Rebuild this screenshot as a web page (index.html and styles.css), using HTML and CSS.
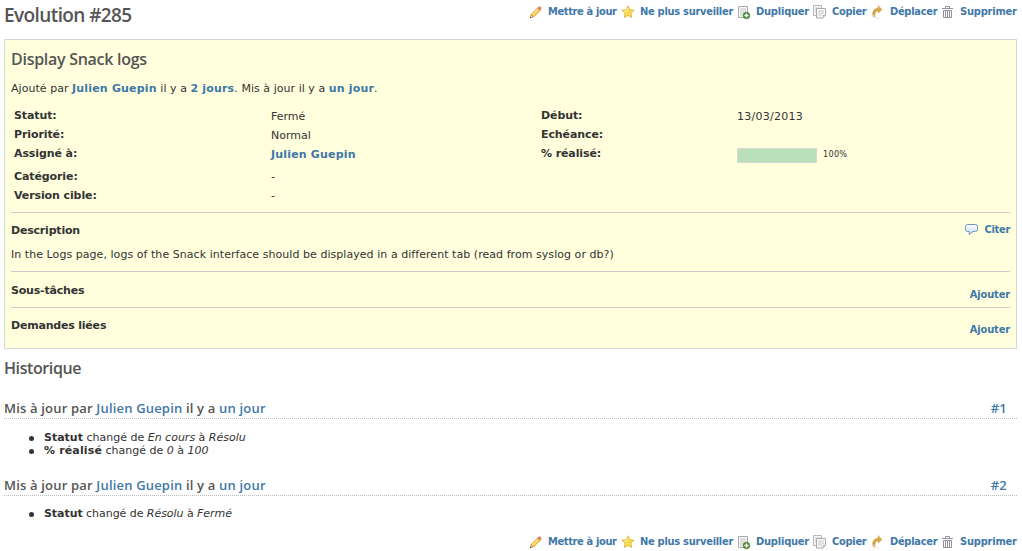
FILE: index.html
```html
<!DOCTYPE html>
<html lang="fr">
<head>
<meta charset="utf-8">
<title>Evolution #285</title>
<link rel="stylesheet" href="styles.css">
</head>
<body>
<svg class="defs" width="0" height="0" aria-hidden="true">
  <defs>
    <linearGradient id="gold" x1="0" y1="0" x2="0" y2="1"><stop offset="0" stop-color="#dfb65c"/><stop offset=".7" stop-color="#d09a38"/><stop offset="1" stop-color="#ead9b8"/></linearGradient>
    <linearGradient id="bubble" x1="0" y1="0" x2="0" y2="1"><stop offset="0" stop-color="#fff"/><stop offset="1" stop-color="#bcdcf5"/></linearGradient>
    <symbol id="edit" viewBox="0 0 16 16"><path d="M2.2 13.8l.9-3.2 2.3 2.3z" fill="#f6ddb0" stroke="#8a6a3a" stroke-width=".6"/><path d="M3.2 10.5l6.2-6.2 2.4 2.4-6.2 6.2z" fill="#ffd34a" stroke="#d58d25" stroke-width=".8"/><path d="M4.4 11l5.9-5.9" stroke="#fff1a5"/><path d="M9.6 4.1l1.2-1.2q1-.6 1.8.2t.4 2l-1.1 1.3z" fill="#e98a6b" stroke="#c8694a" stroke-width=".6"/><path d="M2 14l1.3-.4-.9-.9z" fill="#333"/></symbol>
    <symbol id="fav" viewBox="0 0 16 16"><path d="M8 1.8l1.8 4 4.4.5-3.3 2.9.9 4.4L8 11.4l-3.8 2.2.9-4.4-3.3-2.9 4.4-.5z" fill="#f7dc55" stroke="#dfb640" stroke-width=".9" stroke-linejoin="round"/><path d="M8 3.7L6.8 6.8 4 7.2" fill="none" stroke="#fff3a5"/></symbol>
    <symbol id="duplicate" viewBox="0 0 16 16"><path d="M2.5 2.5h9v11h-9z" fill="#f7f7f7" stroke="#aaa"/><path d="M4 5h6M4 7h6M4 9h4M4 11h3" stroke="#c9c9c9"/><circle cx="10.5" cy="11.5" r="3.3" fill="#538c3c" stroke="#3c752c" stroke-width=".6"/><path d="M8.5 11.5h4M10.5 9.5v4" stroke="#fff" stroke-width="1.3"/></symbol>
    <symbol id="copy" viewBox="0 0 16 16"><path d="M1.5 1.5h8v10h-8z" fill="#f6f6f6" stroke="#b8b8b8"/><path d="M3 4h5M3 6h2M3 8h2" stroke="#ccc"/><path d="M4.5 4.5h9v7l-2.5 2.5H4.5z" fill="#fafafa" stroke="#aaa"/><path d="M6 7h6M6 9h6M6 11h4" stroke="#c8c8c8"/><path d="M11 14v-2.5h2.5" fill="#ddd" stroke="#aaa" stroke-width=".7"/></symbol>
    <symbol id="move" viewBox="0 0 16 16"><path d="M3 13C1.6 7.7 4 4.4 8 4.1V1.3l4.2 4.2L8 9.3V6.9C5.6 7 4.5 9.3 5.5 13z" fill="url(#gold)" stroke="#d1a04a" stroke-width=".3"/><path d="M2 14.5q5-2 10 0z" fill="#e8e8e8"/></symbol>
    <symbol id="del" viewBox="0 0 16 16"><path d="M2 4.5h11M5.5 4V2.5h4V4M3.5 6.5h8v7h-8zM5.5 7v6M7.5 7v6M9.5 7v6" fill="none" stroke="#92929b"/></symbol>
    <symbol id="comment" viewBox="0 0 16 16"><path d="M3.5 2.5h8q2 0 2 2v3q0 2-2 2H9L5.2 12.5V9.5H3.5q-2 0-2-2v-3q0-2 2-2z" fill="url(#bubble)" stroke="#7694bd"/></symbol>
  </defs>
</svg>

<header class="top">
  <h2>Evolution #285</h2>
  <nav class="contextual">
    <a class="update"><svg><use href="#edit"/></svg><span>Mettre à jour</span></a>
    <a class="watch"><svg><use href="#fav"/></svg><span>Ne plus surveiller</span></a>
    <a class="dup"><svg><use href="#duplicate"/></svg><span>Dupliquer</span></a>
    <a class="cpy"><svg><use href="#copy"/></svg><span>Copier</span></a>
    <a class="mov"><svg><use href="#move"/></svg><span>Déplacer</span></a>
    <a class="rem"><svg><use href="#del"/></svg><span>Supprimer</span></a>
  </nav>
</header>

<main class="issue">
  <h3>Display Snack logs</h3>
  <p class="author">Ajouté par <a>Julien Guepin</a> il y a <a>2 jours</a>. Mis à jour il y a <a>un jour</a>.</p>
  <div class="attributes">
    <b>Statut:</b><span>Fermé</span><b>Début:</b><span class="date">13/03/2013</span>
    <b>Priorité:</b><span>Normal</span><b>Echéance:</b><span></span>
    <b>Assigné à:</b><span><a>Julien Guepin</a></span><b>% réalisé:</b><div class="progress"><i class="bar"></i><small>100%</small></div>
    <b>Catégorie:</b><span class="none">-</span><b></b><span></span>
    <b>Version cible:</b><span class="none">-</span><b></b><span></span>
  </div>
  <section class="description">
    <div class="line"><b>Description</b><a class="action cite"><svg><use href="#comment"/></svg><span>Citer</span></a></div>
    <p>In the Logs page, logs of the Snack interface should be displayed in a different tab (read from syslog or db?)</p>
  </section>
  <section class="subtasks"><div class="line"><b>Sous-tâches</b><a class="action add"><span>Ajouter</span></a></div></section>
  <section class="relations"><div class="line"><b>Demandes liées</b><a class="action add"><span>Ajouter</span></a></div></section>
</main>

<section class="history">
  <h3>Historique</h3>
  <article class="first">
    <h4><span>Mis à jour par <a>Julien Guepin</a> il y a <a>un jour</a></span><a class="num">#1</a></h4>
    <ul>
      <li><b>Statut</b> changé de <em>En cours</em> à <em>Résolu</em></li>
      <li><b class="wide">% réalisé</b> changé de <em>0</em> à <em>100</em></li>
    </ul>
  </article>
  <article class="second">
    <h4><span>Mis à jour par <a>Julien Guepin</a> il y a <a>un jour</a></span><a class="num">#2</a></h4>
    <ul>
      <li><b>Statut</b> changé de <em>Résolu</em> à <em>Fermé</em></li>
    </ul>
  </article>
</section>

<footer>
  <nav class="contextual">
    <a class="update"><svg><use href="#edit"/></svg><span>Mettre à jour</span></a>
    <a class="watch"><svg><use href="#fav"/></svg><span>Ne plus surveiller</span></a>
    <a class="dup"><svg><use href="#duplicate"/></svg><span>Dupliquer</span></a>
    <a class="cpy"><svg><use href="#copy"/></svg><span>Copier</span></a>
    <a class="mov"><svg><use href="#move"/></svg><span>Déplacer</span></a>
    <a class="rem"><svg><use href="#del"/></svg><span>Supprimer</span></a>
  </nav>
</footer>
</body>
</html>
```
FILE: styles.css
```css
* { box-sizing: border-box; margin: 0; padding: 0; }
body { width: 1022px; height: 551px; overflow: hidden; padding: 0 5px 0 4px; background: #fff; color: #333; font: 11px/14px "DejaVu Sans", Verdana, sans-serif; }
.defs { display: block; }
a { color: #4078a8; font-weight: bold; text-decoration: none; letter-spacing: .18px; }
h2, h3, h4 { font-family: "Open Sans", "Trebuchet MS", sans-serif; font-weight: 600; color: #555; white-space: nowrap; }

.top { display: flex; justify-content: space-between; height: 39px; }
h2 { font-size: 19px; line-height: 30px; letter-spacing: -.6px; }
.contextual { display: flex; justify-content: flex-end; gap: 3px; height: 16px; padding-top: 4px; box-sizing: content-box; }
.contextual a, .action { display: flex; font: bold 11px/16px "DejaVu Sans Condensed", "DejaVu Sans", sans-serif; letter-spacing: -.28px; white-space: nowrap; }
.contextual svg, .cite svg { width: 16px; height: 16px; margin-right: 4px; flex: none; }
.update { width: 89px; }
.contextual .update { letter-spacing: -.36px; }
.watch { width: 113px; }
.dup { width: 73px; }
.contextual .dup, .contextual .rem { letter-spacing: -.2px; }
.cpy { width: 55px; }
.mov { width: 67px; }
.rem { width: 77px; }

.issue { height: 310px; padding: 10px 6px 0; background: #ffffdd; border: 1px solid #d7d7d7; }
.issue h3 { font-size: 16px; line-height: 18px; letter-spacing: -.28px; }
.author { margin-top: 14px; letter-spacing: .04px; }
.attributes { display: grid; grid-template-columns: 257px 270px 196px 1fr; grid-template-rows: 19px 19px 23px 19px 19px; height: 106px; margin-top: 10px; padding-left: 3px; line-height: 19px; }
.attributes > b { letter-spacing: -.1px; }
.attributes > span { padding-top: 1px; }
.attributes > .none { padding-top: 0; }
.date { letter-spacing: .25px; }
.progress { display: flex; padding-top: 4px; }
.bar { width: 80px; height: 15px; background: #bae0ba; border: 1px solid #d7d7d7; }
.progress small { margin-left: 6px; font: 9px/12px "DejaVu Sans Condensed", sans-serif; letter-spacing: .3px; }
.issue section { border-top: 1px solid #ccc; }
.line { display: flex; justify-content: space-between; letter-spacing: -.2px; }
.description { height: 59px; padding-top: 11px; }
.description p { margin-top: 10px; letter-spacing: .05px; }
.cite { height: 14px; margin-top: -2px; }
.subtasks { height: 36px; padding-top: 12px; }
.relations { height: 36px; padding-top: 11px; }
.line .add { margin-top: 3px; letter-spacing: -.15px; }

.history h3 { font-size: 16px; line-height: 20px; padding-top: 9px; letter-spacing: -.4px; }
.history h4 { display: flex; justify-content: space-between; height: 20px; padding-right: 10px; border-bottom: 1px dotted #bbb; font-size: 13px; line-height: 19px; letter-spacing: .18px; }
.history h4 a { font-weight: 600; letter-spacing: .18px; }
.first { height: 77px; margin-top: 21px; }
.second { height: 54px; }
ul { padding: 12px 0 0 40px; line-height: 13px; list-style: none; }
li { height: 13px; }
li::before { content: ""; float: left; width: 5px; height: 5px; margin: 5px 0 0 -15px; border-radius: 50%; background: #333; }
.wide { letter-spacing: .15px; }
.second ul { padding-top: 11px; letter-spacing: -.05px; }
```
